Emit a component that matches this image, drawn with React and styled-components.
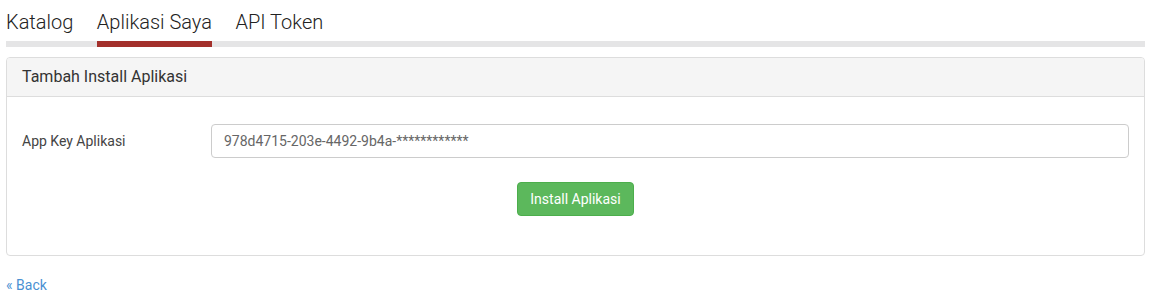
import React from "react";
import styled, { createGlobalStyle } from "styled-components";

const Global = createGlobalStyle`
  html, body { margin: 0; padding: 0; background: #fff; }
  body { font-family: Roboto, "Liberation Sans", Arial, sans-serif; color: #333; }
  * { box-sizing: border-box; }
`;

const Page = styled.div`
  padding: 0 6px;
`;

const TabList = styled.div`
  display: flex;
  gap: 23.5px;
  border-bottom: 6px solid #e5e5e6;
`;

const Tab = styled.a`
  display: block;
  font-size: 20px;
  font-weight: 300;
  line-height: 22px;
  padding: 11px 0 8px;
  margin-bottom: -6px;
  color: #222;
  text-decoration: none;
  cursor: pointer;
  border-bottom: 6px solid ${(p) => (p.$active ? "#a3302b" : "transparent")};
`;

const Panel = styled.div`
  margin-top: 10px;
  border: 1px solid #dddddd;
  border-radius: 4px;
  background: #fff;
`;

const PanelHeading = styled.div`
  background: #f5f5f5;
  border-bottom: 1px solid #dddddd;
  border-radius: 3px 3px 0 0;
  padding: 9px 15px;
  font-size: 16px;
  line-height: 20px;
  color: #333;
`;

const PanelBody = styled.div`
  padding: 27px 15px 39px;
  display: flex;
  flex-direction: column;
  align-items: center;
`;

const FormRow = styled.div`
  align-self: stretch;
  display: grid;
  grid-template-columns: 189px 1fr;
  align-items: start;
`;

const Label = styled.label`
  font-size: 14px;
  line-height: 20px;
  padding-top: 7px;
  color: #444;
`;

const Input = styled.input`
  height: 34px;
  width: 100%;
  padding: 6px 12px;
  font-family: inherit;
  font-size: 14px;
  line-height: 20px;
  color: #666;
  border: 1px solid #cccccc;
  border-radius: 4px;
  outline: none;
  background: #fff;
`;

const Button = styled.button`
  margin-top: 24px;
  height: 34px;
  padding: 6px 12px;
  font-family: inherit;
  font-size: 14px;
  line-height: 20px;
  color: #fff;
  background: #5cb85c;
  border: 1px solid #4cae4c;
  border-radius: 4px;
  cursor: pointer;
`;

const BackLink = styled.a`
  display: inline-block;
  margin-top: 19px;
  font-size: 14px;
  line-height: 20px;
  color: #4a90d2;
  text-decoration: none;
`;

export default function App() {
  return (
    <Page>
      <Global />
      <TabList>
        <Tab>Katalog</Tab>
        <Tab $active>Aplikasi Saya</Tab>
        <Tab>API Token</Tab>
      </TabList>
      <Panel>
        <PanelHeading>Tambah Install Aplikasi</PanelHeading>
        <PanelBody>
          <FormRow>
            <Label>App Key Aplikasi</Label>
            <Input readOnly value="978d4715-203e-4492-9b4a-************" />
          </FormRow>
          <Button>Install Aplikasi</Button>
        </PanelBody>
      </Panel>
      <BackLink href="#">« Back</BackLink>
    </Page>
  );
}
